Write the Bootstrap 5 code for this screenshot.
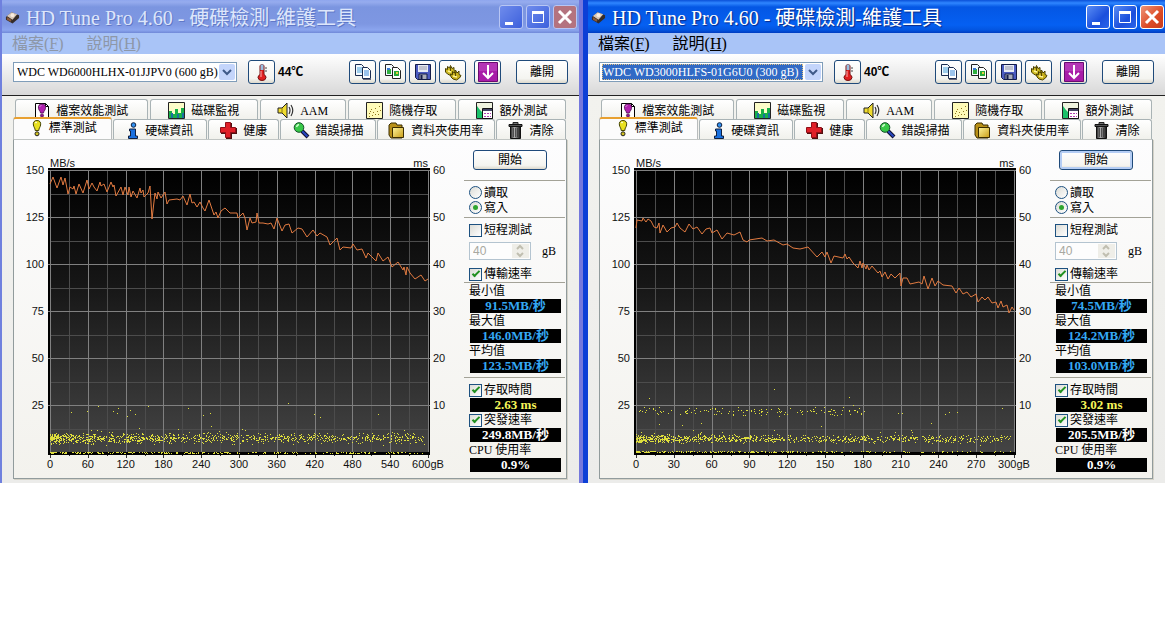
<!DOCTYPE html>
<html lang="zh-Hant">
<head>
<meta charset="utf-8">
<meta name="viewport" content="width=device-width, initial-scale=1">
<title>HD Tune Pro 4.60</title>
<link href="https://cdn.jsdelivr.net/npm/bootstrap@5.3.0/dist/css/bootstrap.min.css" rel="stylesheet">
<style>
  :root { --ui: "Liberation Serif", "Noto Sans CJK TC", serif; --num: "Liberation Sans", "Noto Sans CJK TC", sans-serif; }
  body { font-family: var(--ui); font-size: 12px; line-height: 14px; color: #000; background: #fff; }
  button, select, input { font-family: inherit; font-size: inherit; line-height: inherit; }
  svg { display: block; flex: none; }

  .app-window { flex: 1 1 1px; min-width: 0; background: #ececea; border: 0 solid #6f80de; border-width: 0 4px 0 2px; border-right-color: #7478dc; }
  .app-window.is-front { flex-basis: 0; border-width: 0 0 0 5px; border-left-color: #0c3fd6; }

  .title-bar { height: 33px; padding: 0 2px 0 3px; color: #dde6fb; background: linear-gradient(#8fa6ee 0, #96acee 2px, #7b95e0 7px, #7e97e2 24px, #8ba5ee 30px, #7089d8 33px); }
  .is-front .title-bar { color: #fff; padding-right: 1px; background: linear-gradient(#0a50d8 0, #2f86ff 3px, #0457e4 7px, #0560f2 25px, #0355e0 30px, #003cc0 33px); }
  .title-bar h1 { font-size: 20px; line-height: 28px; padding: 2px 0 0 2px; text-shadow: 1px 1px 0 #6078c8; }
  .is-front .title-bar h1 { text-shadow: 1px 1px 1px #0a2a88; }
  .win-btn { width: 24px; height: 24px; border: 1px solid #b8c6f4; border-radius: 3px; background: linear-gradient(135deg, #6f8cec, #3d60dc); }
  .win-btn.is-close { background: #b4737f; }
  .is-front .win-btn { border-color: #fff; background: linear-gradient(135deg, #5a8df4, #1b4fdc 60%, #2a66ea); }
  .is-front .win-btn.is-close { background: linear-gradient(135deg, #ee9478, #dc4a26 60%, #c83c1c); }

  .menu-row { height: 21px; padding-left: 10px; gap: 23px; font-size: 16px; line-height: 22px; background: #a9c4f7; }
  .menu-row a { color: #8d97a8; text-decoration: none; }
  .is-front .menu-row a { color: #000; }

  .tool-row { height: 42px; padding: 0 11px 5px 11px; border-bottom: 1px solid #222; background: linear-gradient(#fff, #efefef 40%, #d8d8d8); }
  .drive-box { flex: 0 1 224px; min-width: 0; height: 20px; padding: 1px; border: 1px solid #7f9db9; background: #fff; }
  .drive-box select { appearance: none; border: 0; padding: 0 0 0 2px; background: #fff; min-width: 0; outline-offset: -1px; color: #000; }
  .is-front .drive-box select { color: #fff; background: #316ac5; outline: 1px dotted #e0c080; margin: 0 2px 0 1px; padding-left: 1px; }
  .drop-arrow { width: 16px; background: #c4d5fb; border-radius: 2px; }
  .xp-btn { height: 24px; border: 1px solid #1f4a7a; border-radius: 3px; background: linear-gradient(#fff, #f4f4f0 80%, #dcd8cc); color: #000; }
  .tool-btn { width: 27px; }
  .exit-btn { width: 52px; margin-left: 15px; }
  .temp-text { font: bold 12px/14px var(--num); padding-left: 3px; }

  .tab-area { padding: 3px 12px 4px 11px; background: linear-gradient(#f2f2ee, #ececea); }
  .tab-line { height: 20px; gap: 2px; }
  .tab-line.upper { padding: 0 1px 0 2px; }
  .tab-line.lower { gap: 1px; padding-right: 1px; }
  .tab-line button { flex: 1 1 0; min-width: 0; height: 20px; padding: 2px 0 0; gap: 6px; white-space: nowrap; color: #000;
    background: linear-gradient(#fff, #f1f1ec); border: 1px solid #a9b3b5; border-bottom: 0; border-radius: 3px 3px 0 0; }
  .tab-line button.current { height: 22px; margin-top: -2px; padding: 0 0 2px; gap: 4px; position: relative; background: #fcfcfc; border-top: 2px solid #e8a030; border-right-color: #b8bcbc; border-left-color: #b8bcbc; }

  .bench { border: 1px solid #919b9c; border-top-color: #c2c6c4; background: linear-gradient(#fdfdfe, #f3f2ed); box-shadow: 1px 1px 0 #d4d2c8; display: grid; grid-template-columns: 34px minmax(0, 1fr) 34px 102px; }
  .chart-num { font: 11px/14px var(--num); color: #111; }
  .unit-row { height: 28px; padding: 16px 2px 0; }
  .y-axis { padding-top: 30px; height: 312px; }
  .y-axis span { height: 0; line-height: 0; }
  .y-axis.on-left { padding-right: 4px; text-align: right; }
  .y-axis.on-right { padding-left: 3px; }
  .plot svg { width: 100%; height: 290px; }
  .x-axis { padding: 0 2px; margin-top: -1px; }
  .x-axis span { width: 0; display: flex; justify-content: center; white-space: nowrap; }

  .side { padding: 10px 1px 6px 0; }
  .side hr { margin: 0; border: 0; height: 1px; opacity: 1; background: #a3a297; }
  .side-set { padding: 4px 4px 0 5px; }
  .start-btn { height: 20px; width: 74px; margin: 0 0 10px 9px; padding: 0; }
  .is-front .start-btn { box-shadow: inset 0 0 0 2px #b4cdf4; }
  .opt { height: 16px; gap: 2px; }
  .opt.radio-line { height: 15px; }
  .opt input { appearance: none; margin: 0; width: 13px; height: 13px; border: 1px solid #1d5180; background: linear-gradient(135deg, #dcdcd6, #fff); display: grid; place-items: center; flex: none; }
  .opt input[type=radio] { border-radius: 50%; }
  .opt input[type=radio]:checked::before { content: ""; width: 5px; height: 5px; border-radius: 50%; background: #2fa52f; }
  .opt input[type=checkbox]:checked::before { content: ""; width: 8px; height: 4px; border: solid #21901f; border-width: 0 0 2px 2px; transform: rotate(-45deg); margin-top: -3px; }
  .len-row { height: 18px; margin: 4px 0 6px; gap: 11px; }
  .len-box { width: 62px; height: 18px; border: 1px solid #b4c4d0; background: #fdfdfd; padding: 1px; }
  .len-box input { width: 100%; min-width: 0; border: 0; padding: 0 0 0 2px; background: none; font-family: var(--num); color: #a8a8a0; }
  .caption-line { height: 16px; line-height: 16px; }
  .readout { display: block; height: 14px; margin-left: 1px; background: #000; color: #34a8f4; font-size: 13px; font-weight: bold; line-height: 13px; text-align: center; }
  .readout.yellow { color: #f6f65a; }
  .readout.plain { color: #fff; }
</style>
</head>
<body>

<svg width="0" height="0" class="position-absolute" aria-hidden="true">
  <defs>
    <linearGradient id="plotShade" x1="0" y1="0" x2="0" y2="1"><stop offset="0" stop-color="#000"/><stop offset=".4" stop-color="#161616"/><stop offset="1" stop-color="#444"/></linearGradient>
    <linearGradient id="trashShade"><stop offset="0" stop-color="#222"/><stop offset=".4" stop-color="#aaa"/><stop offset="1" stop-color="#111"/></linearGradient>
    <linearGradient id="goldShade" x1="0" y1="0" x2="1" y2="1"><stop offset="0" stop-color="#fff6a0"/><stop offset="1" stop-color="#c89c14"/></linearGradient>
  </defs>
  <symbol id="i-app" viewBox="0 0 16 16"><path d="M1 8l6-5 8 3v3l-7 6-7-4z" fill="#352c2a"/><path d="M2 7l5-4 6 2-5 6z" fill="#d8c8b8"/><circle cx="8" cy="6" r="2" fill="#f8ece0"/><path d="M2 8l5 3-1 2-4-2z" fill="#8a5a3a"/></symbol>
  <symbol id="i-file" viewBox="0 0 16 17"><path d="M1.500 1.500h10l3 3v12h-13z" fill="#fff" stroke="#000"/><path d="M11.500 1.500v3h3" fill="none" stroke="#000"/><path d="M8 2c3 0 4 2 3.500 4.500C11 9 9.500 9 9.500 11h-3c0-2-1.500-2-2-4.500C4 4 5 2 8 2z" fill="#b020b0" stroke="#501050" stroke-width=".8"/><path d="M6 4.500l1-1" stroke="#fff"/><circle cx="8" cy="13.500" r="1.600" fill="#901890" stroke="#400840" stroke-width=".6"/></symbol>
  <symbol id="i-bars" viewBox="0 0 17 17"><path d="M.5.5h16v16H.5z" fill="#fcfcc8" stroke="#222"/><path d="M1 9h3v7H1zM5 12h2v4H5zM7 7h3v9H7zM10 11h3v5h-3zM13 6h3v10h-3z" fill="#18b048"/><path d="M3 11h2v5H3zM9 12h2v4H9zM14 11h2v5h-2z" fill="#1870a0"/></symbol>
  <symbol id="i-sound" viewBox="0 0 17 17"><path d="M1 6h4l5-5v15l-5-5H1z" fill="#f0dc30" stroke="#222"/><path d="M5 6v5" stroke="#8a7a10"/><path d="M12 5q2 3 0 7M14 3q3.500 5.500 0 11" fill="none" stroke="#333" stroke-width="1.200"/></symbol>
  <symbol id="i-dots" viewBox="0 0 17 17"><path d="M.5.5h16v16H.5z" fill="#fffbb8" stroke="#222"/><path d="M3 11h1v1H3zM5 7h1v1H5zM7 10h1v1H7zM9 6h1v1H9zM11 9h1v1h-1zM13 4h1v1h-1zM12 12h1v1h-1zM6 13h1v1H6zM4 9h1v1H4zM9 12h1v1H9zM14 8h1v1h-1zM3 14h1v1H3z" fill="#907820"/></symbol>
  <symbol id="i-extra" viewBox="0 0 17 17"><path d="M.5.5h16v16H.5z" fill="#f0f4e0" stroke="#222"/><path d="M1 4l3 4 2 2v6H1z" fill="#18c068"/><path d="M6.500 6.500h10v10h-10z" fill="#fff" stroke="#111"/><path d="M7 7h9v2H7z" fill="#446"/><path d="M8 11h2v1H8zM11 11h2v1h-2zM14 11h1v1h-1zM8 14h2v1H8zM11 14h2v1h-2zM14 14h1v1h-1z" fill="#b040b0"/></symbol>
  <symbol id="i-bulb" viewBox="0 0 10 17"><path d="M5 .5c3 0 4 2 3.600 4.500C8.200 7.500 6.800 8 6.800 10.500H3.200C3.200 8 1.800 7.500 1.400 5 1 2.500 2 .5 5 .5z" fill="#e8e020" stroke="#444400"/><path d="M3.500 3l1-1" stroke="#fff" stroke-width="1.500"/><circle cx="5" cy="13.800" r="2" fill="#d0c020" stroke="#222"/></symbol>
  <symbol id="i-info" viewBox="0 0 12 17"><circle cx="6.500" cy="3" r="2.300" fill="#3090f0" stroke="#102040"/><path d="M2.500 7h6v7h2v2.500h-9V14h2V9h-1z" fill="#1870e0" stroke="#102040"/></symbol>
  <symbol id="i-cross" viewBox="0 0 17 17"><path d="M6 1h6v5h5v6h-5v5H6v-5H1V6h5z" fill="#501010"/><path d="M5.500.5h5v5h5v5h-5v5h-5v-5h-5v-5h5z" fill="#e02028" stroke="#901018"/></symbol>
  <symbol id="i-lens" viewBox="0 0 17 17"><path d="M9 9l6 6" stroke="#101030" stroke-width="4"/><path d="M9 9l5.500 5.500" stroke="#2848c0" stroke-width="2"/><circle cx="6" cy="5.500" r="4.800" fill="#38c848" stroke="#145028"/><path d="M3.500 5q.5-2 2.500-2.500" stroke="#d0ffd0" fill="none" stroke-width="1.500"/></symbol>
  <symbol id="i-folder" viewBox="0 0 17 17"><path d="M1 3l2-2h5l1 2h5v13H3L1 13z" fill="#b89018" stroke="#3a2c00"/><path d="M4.500 5.500h11v10h-11z" fill="url(#goldShade)" stroke="#3a2c00"/></symbol>
  <symbol id="i-trash" viewBox="0 0 15 17"><path d="M5 .5h5v2H5z" fill="#777" stroke="#222"/><path d="M1 2.500h13v2H1z" fill="#555" stroke="#111"/><path d="M2.500 4.500h10v12h-10z" fill="url(#trashShade)" stroke="#111"/><path d="M5.500 6v9M7.500 6v9M9.500 6v9" stroke="#333" stroke-width=".7"/></symbol>
  <symbol id="i-temp" viewBox="0 0 10 18"><path d="M3 2.500q2-2 4 0v9q2 1 2 3.200Q8.500 17.500 5 17.500T1 14.700q0-2.200 2-3.200z" fill="#e02020" stroke="#701010"/><path d="M3.500 1.500h3V7h-3z" fill="#98c0e0"/><path d="M4 8v6" stroke="#ffb0b0"/><path d="M8 5h2M8 8h2" stroke="#444"/></symbol>
  <symbol id="i-copy" viewBox="0 0 16 16"><path d="M.5.5h6l2 2v9h-8z" fill="#f4faff" stroke="#1a2c50"/><path d="M2 4h5M2 6h5M2 8h5" stroke="#48a0d8"/><path d="M7.500 3.500h5l3 3v8h-8z" fill="#fff" stroke="#1a2c50"/><path d="M9 7h5M9 9h5M9 11h5" stroke="#3888d8"/><path d="M8 15.500h8" stroke="#667"/></symbol>
  <symbol id="i-shots" viewBox="0 0 16 16"><path d="M.5.5h6l2 2v9h-8z" fill="#f4faff" stroke="#222"/><path d="M2 5h4v5H2z" fill="#30b040"/><path d="M2 4h3v2H2z" fill="#3878d0"/><path d="M7.500 3.500h5l3 3v8h-8z" fill="#fff" stroke="#222"/><path d="M9 7h5v5H9z" fill="#28a838"/><path d="M11 8h2v2h-2z" fill="#e8d040"/></symbol>
  <symbol id="i-save" viewBox="0 0 16 16"><path d="M.5.5h15v15h-13l-2-2z" fill="#4c5cc0" stroke="#141c48"/><path d="M3 1h10v7H3z" fill="#e8ecf4"/><path d="M4 3h8M4 5h8" stroke="#99a"/><path d="M4 10h8v5.500H4z" fill="#a8acb8" stroke="#141c48"/><path d="M5.500 11h2v4h-2z" fill="#141c48"/></symbol>
  <symbol id="i-gears" viewBox="0 0 18 17"><path d="M1.500 4.500l2 1v-3l2 1.500 1-2.500 1.500 3 2-1v3l1.500 1-2 2.500-3 1.500-3-1.500-2-2z" fill="#d0bc24" stroke="#4a4000"/><path d="M6.500 10l2 .5v-3l2 1.500 1-3 1.500 3 2-2v3.500l2 1-1.500 2.500-3 2-3.500-1-2-2z" fill="#c8b01c" stroke="#4a4000"/><path d="M4 7l3 1M9 12l4 1" stroke="#fff49a" stroke-width="1.500"/><path d="M6.500 3v4M11.500 8v4" stroke="#5a4c00"/></symbol>
  <symbol id="i-down" viewBox="0 0 20 20"><path d="M.5.5h19v19H.5z" fill="#a81ca8" stroke="#6a0c70"/><path d="M1 1h18v8H1z" fill="#c050c4" opacity=".5"/><path d="M10 3v13M5 11l5 5 5-5" fill="none" stroke="#fff" stroke-width="2"/></symbol>
</svg>

<main class="d-flex align-items-start" id="desk"></main>

<script src="https://cdn.jsdelivr.net/npm/bootstrap@5.3.0/dist/js/bootstrap.bundle.min.js"></script>
<script>
const drives = [
  { id: 'a', front: false, name: 'WDC WD6000HLHX-01JJPV0 (600 gB)', temp: '44℃', step: 60,
    min: '91.5', max: '146.0', avg: '123.5', access: '2.63', burst: '249.8', seed: 7,
    line: '2,16 5,9 9,20 13,9 15,17 17,10 20,26 22,19 25,21 26,18 28,26 31,16 35,25 39,12 41,21 44,15 46,19 49,23 52,14 53,18 56,16 59,24 63,14 65,19 66,17 68,28 73,19 75,27 77,19 80,27 81,19 83,29 85,23 89,30 92,20 93,25 95,22 96,29 100,25 102,18 104,51 107,25 109,31 110,24 113,30 117,24 119,36 121,32 129,31 132,32 135,28 139,37 142,26 144,35 146,34 149,39 152,34 155,40 157,43 161,32 166,47 168,44 170,50 173,43 177,40 182,45 189,45 190,50 195,45 197,50 199,62 202,50 204,55 208,54 209,45 211,55 215,55 220,56 223,55 226,61 229,50 234,63 237,57 241,56 244,65 250,60 254,61 259,69 265,62 269,68 272,65 279,69 282,77 285,74 289,70 292,82 295,79 303,80 305,76 309,82 314,81 318,90 320,85 328,93 330,85 335,93 340,89 344,99 350,94 355,102 356,99 358,107 359,99 362,105 367,111 373,107 377,113 380,111',
    bands: [[1000, 264, 276, 1.5], [260, 284, 285, 1.2], [50, 259, 280, 1.2]],
    stray: [[23,244],[39,243],[50,238],[65,243],[70,240],[69,245],[82,242],[87,246],[79,248],[100,238],[140,240],[155,247],[162,245],[194,261],[240,235],[266,246],[272,249],[330,246],[163,258]] },
  { id: 'b', front: true, name: 'WDC WD3000HLFS-01G6U0 (300 gB)', temp: '40℃', step: 30,
    min: '74.5', max: '124.2', avg: '103.0', access: '3.02', burst: '205.5', seed: 21,
    line: '2,60 3,52 8,53 9,50 12,54 14,51 17,53 20,59 23,60 25,55 26,65 29,57 33,64 37,60 41,59 43,55 46,60 51,64 55,56 59,61 63,59 68,66 72,61 76,60 78,65 83,62 88,71 93,65 100,67 106,64 109,72 113,74 115,72 128,70 133,73 140,72 149,77 153,76 159,80 166,81 174,79 183,89 188,84 191,89 193,84 197,95 200,88 209,90 211,86 213,91 215,89 219,95 224,100 226,93 228,100 229,95 232,101 233,97 235,102 238,98 244,105 246,103 248,109 251,104 254,111 257,106 261,110 266,105 267,118 269,110 273,110 276,116 285,114 288,116 290,108 294,121 298,110 301,118 304,113 309,117 318,118 322,125 325,120 329,126 333,124 337,129 342,126 344,134 348,129 351,132 354,129 358,135 362,134 364,140 367,133 369,139 373,137 375,145 378,139 380,142',
    bands: [[900, 266, 275, 1.5], [230, 283, 284, 1.7], [40, 258, 277, 1.6]],
    stray: [[15,230],[140,221],[215,229],[219,237],[25,256],[48,257],[67,255],[187,258],[264,245],[268,245],[297,255],[311,246],[315,244],[323,244],[368,240]], extra: 130 }
];

// Small repeatable generator, so that the access-time dots stay put between loads
function dice(seed) { return () => (seed = (seed * 16807) % 2147483647) / 2147483647; }

function dots(d) {
  const r = dice(d.seed * 1013), put = (x, y) => `M${Math.round(x)} ${Math.round(y)}h1v1h-1z`;
  let p = d.stray.map(s => put(...s)).join('');
  for (const [n, lo, hi, pull] of d.bands)
    for (let i = 0; i < n; i++) p += put(2 + 374 * Math.pow(r(), pull), lo + (hi - lo) * (r() + r()) / 2);
  for (let i = 0; i < (d.extra || 0); i++) p += put(4 + 226 * r(), 238 + 10 * (r() + r()) / 2);
  return p;
}

function plot(d) {
  let minor = '', major = '', ticks = '';
  for (let i = 0; i <= 20; i++) {
    const x = Math.round(2 + i * 18.9) + .5;
    if (i % 2) minor += `M${x} 2V284`; else major += `M${x} 2V284`;
    ticks += `M${x} 287v${i % 2 ? 1 : 3}`;
  }
  for (let i = 0; i <= 12; i++) {
    const y = Math.round(2 + i * 23.5) + .5;
    if (i % 2) minor += `M2 ${y}H380`; else if (i < 12) major += `M0 ${y}H382`;
  }
  return `<svg viewBox="0 0 382 290" preserveAspectRatio="none" role="img" aria-label="${d.name}">
    <path d="M0 0h382v287H0z" fill="#000"/><path d="M2 2h378v282H2z" fill="url(#plotShade)"/>
    <path d="${minor}" stroke="#4c4c4c"/><path d="${major}" stroke="#808080"/><path d="${ticks}" stroke="#333"/>
    <polyline points="${d.line}" fill="none" stroke="#e27b41"/>
    <path d="${dots(d)}" fill="#dede3c" shape-rendering="crispEdges"/></svg>`;
}

const icon = (n, w = 16, h = 16) => `<svg width="${w}" height="${h}" aria-hidden="true"><use href="#i-${n}"/></svg>`;
const tab = ([n, w, text, grow, cur]) => `<button type="button" role="tab" aria-selected="${!!cur}" class="d-flex align-items-center justify-content-center${cur ? ' current' : ''}" style="flex-grow:${grow}">${icon(n, w, 17)}<span>${text}</span></button>`;
const upper = [['file', 16, '檔案效能測試', 134], ['bars', 17, '磁碟監視', 109], ['sound', 17, 'AAM', 86], ['dots', 17, '隨機存取', 109], ['extra', 17, '額外測試', 109]];
const lower = [['bulb', 16, '標準測試', 100, true], ['info', 12, '硬碟資訊', 94], ['cross', 17, '健康', 71], ['lens', 17, '錯誤掃描', 96], ['folder', 17, '資料夾使用率', 119], ['trash', 15, '清除', 70]];
const check = (d, key, text, on) => `<div class="opt d-flex align-items-center"><input type="checkbox" id="${key}-${d.id}"${on ? ' checked' : ''}><label for="${key}-${d.id}">${text}</label></div>`;
const tool = (n, label, w, h) => `<button type="button" class="xp-btn tool-btn p-0 d-flex align-items-center justify-content-center" aria-label="${label}">${icon(n, w, h)}</button>`;
const values = (a) => a.map(v => `<span>${v}</span>`).join('');

function build(d) {
  const x = Array.from({ length: 11 }, (_, i) => i * d.step + (i === 10 ? 'gB' : ''));
  return `<section class="app-window${d.front ? ' is-front' : ''}">
  <header class="title-bar d-flex align-items-center">
    ${icon('app', 15, 16)}
    <h1 class="m-0 ms-1 fw-normal text-nowrap overflow-hidden flex-grow-1">HD Tune Pro 4.60 - 硬碟檢測-維護工具</h1>
    <div class="d-flex" style="gap:3px">
      <button type="button" class="win-btn p-0" aria-label="最小化"><svg width="22" height="22"><path d="M5 16h8v3H5z" fill="#fff"/></svg></button>
      <button type="button" class="win-btn p-0" aria-label="最大化"><svg width="22" height="22"><path d="M5.500 5.500h11v11h-11z" fill="none" stroke="#fff"/><path d="M5 5h12v3H5z" fill="#fff"/></svg></button>
      <button type="button" class="win-btn is-close p-0" aria-label="關閉"><svg width="22" height="22"><path d="M5 5l12 12M17 5L5 17" stroke="#fff" stroke-width="3"/></svg></button>
    </div>
  </header>
  <nav class="menu-row d-flex"><a href="#">檔案(<u>F</u>)</a><a href="#">說明(<u>H</u>)</a></nav>
  <div class="tool-row d-flex align-items-center">
    <div class="drive-box d-flex"><select class="flex-grow-1" aria-label="硬碟"><option>${d.name}</option></select>
      <span class="drop-arrow d-flex align-items-center justify-content-center"><svg width="10" height="8"><path d="M1 2l4 4 4-4" fill="none" stroke="#3f5a88" stroke-width="2"/></svg></span></div>
    <div class="d-flex align-items-center" style="margin-left:11px">${tool('temp', '溫度', 10, 18)}<span class="temp-text">${d.temp}</span></div>
    <div class="d-flex ms-auto" style="gap:3px">${tool('copy', '複製文字', 16, 16)}${tool('shots', '複製畫面', 16, 16)}${tool('save', '儲存', 16, 16)}${tool('gears', '選項', 18, 17)}</div>
    <div class="ms-2">${tool('down', '更新', 20, 20)}</div>
    <button type="button" class="xp-btn exit-btn p-0">離開</button>
  </div>
  <div class="tab-area">
    <div class="tab-line upper d-flex" role="tablist">${upper.map(tab).join('')}</div>
    <div class="tab-line lower d-flex" role="tablist">${lower.map(tab).join('')}</div>
    <div class="bench">
      <div class="y-axis on-left chart-num d-flex flex-column justify-content-between">${values([150, 125, 100, 75, 50, 25, ''])}</div>
      <div class="plot">
        <div class="unit-row chart-num d-flex justify-content-between"><span>MB/s</span><span>ms</span></div>
        ${plot(d)}
        <div class="x-axis chart-num d-flex justify-content-between">${values(x)}</div>
      </div>
      <div class="y-axis on-right chart-num d-flex flex-column justify-content-between">${values([60, 50, 40, 30, 20, 10, ''])}</div>
      <div class="side">
        <button type="button" class="xp-btn start-btn">開始</button>
        <hr>
        <div class="side-set pb-1">
          <div class="opt radio-line d-flex align-items-center"><input type="radio" name="mode-${d.id}" id="read-${d.id}"><label for="read-${d.id}">讀取</label></div>
          <div class="opt radio-line d-flex align-items-center"><input type="radio" name="mode-${d.id}" id="write-${d.id}" checked><label for="write-${d.id}">寫入</label></div>
        </div>
        <hr style="margin-top:-2px">
        <div class="side-set">
          ${check(d, 'short', '短程測試', false)}
          <div class="len-row d-flex align-items-center">
            <div class="len-box d-flex"><input type="text" id="len-${d.id}" value="40" disabled>
              <svg width="17" height="14"><path d="M0 0h17v14H0z" fill="#efeee8"/><path d="M5 5l3-3 3 3M5 9l3 3 3-3" fill="none" stroke="#c0beb0" stroke-width="2"/></svg></div>
            <label for="len-${d.id}">gB</label>
          </div>
          ${check(d, 'rate', '傳輸速率', true)}
        </div>
        <hr>
        <div class="side-set pt-0 pb-1">
          <div class="caption-line">最小值</div><output class="readout">${d.min}MB/秒</output>
          <div class="caption-line">最大值</div><output class="readout">${d.max}MB/秒</output>
          <div class="caption-line">平均值</div><output class="readout">${d.avg}MB/秒</output>
        </div>
        <hr>
        <div class="side-set">
          ${check(d, 'access', '存取時間', true)}<output class="readout yellow">${d.access} ms</output>
          ${check(d, 'burst', '突發速率', true)}<output class="readout plain">${d.burst}MB/秒</output>
          <div class="caption-line">CPU 使用率</div><output class="readout plain">0.9%</output>
        </div>
      </div>
    </div>
  </div>
</section>`;
}
document.getElementById('desk').innerHTML = drives.map(build).join('');
</script>
</body>
</html>
